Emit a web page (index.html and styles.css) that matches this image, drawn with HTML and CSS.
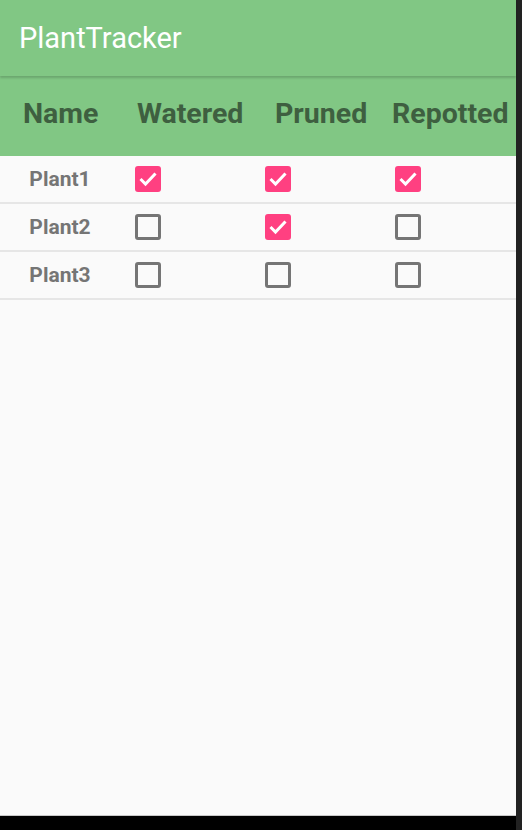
FILE: index.html
```html
<!DOCTYPE html>
<html lang="en">
<head>
    <meta charset="UTF-8">
    <meta name="viewport" content="width=device-width, initial-scale=1.0">
    <title>PlantTracker</title>
    <link rel="stylesheet" href="styles.css">
</head>
<body>
    <div class="screen">
        <div class="toolbar">PlantTracker</div>

        <div class="head">
            <span>Name</span>
            <span>Watered</span>
            <span>Pruned</span>
            <span>Repotted</span>
        </div>

        <div class="row">
            <span class="name">Plant1</span>
            <span class="box on"><svg viewBox="0 0 26 26"><path d="M5.5 13l5 5 10-10.5"/></svg></span>
            <span class="box on"><svg viewBox="0 0 26 26"><path d="M5.5 13l5 5 10-10.5"/></svg></span>
            <span class="box on"><svg viewBox="0 0 26 26"><path d="M5.5 13l5 5 10-10.5"/></svg></span>
        </div>
        <div class="row">
            <span class="name">Plant2</span>
            <span class="box"></span>
            <span class="box on"><svg viewBox="0 0 26 26"><path d="M5.5 13l5 5 10-10.5"/></svg></span>
            <span class="box"></span>
        </div>
        <div class="row">
            <span class="name">Plant3</span>
            <span class="box"></span>
            <span class="box"></span>
            <span class="box"></span>
        </div>
    </div>
    <div class="edge"></div>
</body>
</html>
```

FILE: styles.css
```css
*{
    margin: 0;
    padding: 0;
    box-sizing: border-box;
}
body{
    display: flex;
    align-items: flex-start;
    height: 830px;
    background-color: #000;
    font-family: Roboto, "Liberation Sans", sans-serif;
}
.screen{
    width: 516px;
    height: 816px;
    background-color: #fafafa;
    border-bottom: 1px solid #c8c8c8;
}
.edge{
    width: 6px;
    height: 830px;
    background-color: #222;
}
.toolbar{
    position: relative;
    z-index: 1;
    height: 76px;
    padding: 0 19px;
    line-height: 76px;
    background-color: #81c784;
    color: #fff;
    font-size: 29px;
    box-shadow: 0 2px 2px rgba(0,0,0,0.16);
}
.head{
    display: grid;
    grid-template-columns: 114px 138px 117px 1fr;
    align-items: center;
    height: 80px;
    padding: 0 0 6px 23px;
    background-color: #81c784;
    color: #3e5f40;
    font-size: 28.5px;
    font-weight: bold;
    white-space: nowrap;
}
.row{
    display: grid;
    grid-template-columns: 120px 130px 130px 1fr;
    align-items: center;
    height: 48px;
    border-bottom: 2px solid #e6e6e6;
}
.name{
    text-align: center;
    font-size: 21px;
    font-weight: bold;
    color: #757575;
}
.box{
    display: block;
    width: 26px;
    height: 26px;
    margin-left: 15px;
    border: 3px solid #757575;
    border-radius: 3px;
}
.box.on{
    border: none;
    background-color: #ff4081;
}
.box svg{
    display: block;
    width: 26px;
    height: 26px;
}
.box path{
    fill: none;
    stroke: #fff;
    stroke-width: 3;
}
```
